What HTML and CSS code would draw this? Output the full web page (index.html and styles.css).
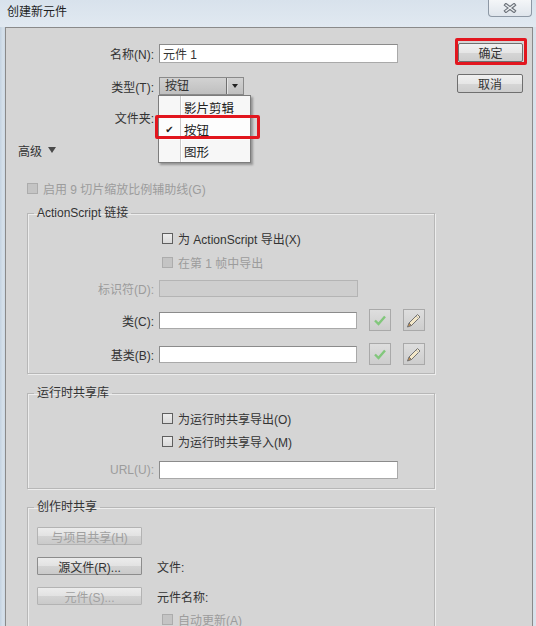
FILE: index.html
```html
<!DOCTYPE html>
<html lang="zh-CN">
<head>
    <meta charset="UTF-8">
    <title>创建新元件</title>
    <link rel="stylesheet" href="styles.css">
</head>
<body>

<div class="window">
    <div class="titlebar">
        <span class="title">创建新元件</span>
        <button class="close">
            <svg width="14" height="10" viewBox="0 0 14 10">
                <path d="M3 2 L11 8 M11 2 L3 8" stroke="#6d737b" stroke-width="3.6" stroke-linecap="square" fill="none"/>
                <path d="M3 2 L11 8 M11 2 L3 8" stroke="#eef1f4" stroke-width="1.3" stroke-linecap="square" fill="none"/>
            </svg>
        </button>
    </div>

    <div class="frame">
        <div class="content">
            <div class="main">
                <div class="row rowName">
                    <span class="label">名称(N):</span>
                    <input class="text textWide" type="text" value="元件 1">
                </div>

                <div class="row rowType">
                    <span class="label">类型(T):</span>
                    <div class="selectWrap">
                        <div class="select">
                            <span class="selectValue">按钮</span>
                            <span class="selectArrow"></span>
                        </div>
                        <ul class="menu">
                            <li><span class="tick"></span>影片剪辑</li>
                            <li class="current"><span class="tick">✔</span>按钮</li>
                            <li><span class="tick"></span>图形</li>
                        </ul>
                        <div class="markMenu"></div>
                    </div>
                </div>

                <div class="row rowFolder">
                    <span class="label">文件夹:</span>
                </div>

                <div class="row advanced">高级<span class="tri"></span></div>

                <div class="row check disabled scaleCheck"><span class="box"></span>启用 9 切片缩放比例辅助线(G)</div>

                <fieldset class="group groupAs">
                    <legend>ActionScript 链接</legend>
                    <div class="row check inGroup firstRow"><span class="box"></span>为 ActionScript 导出(X)</div>
                    <div class="row check inGroup disabled secondCheck"><span class="box"></span>在第 1 帧中导出</div>
                    <div class="row idRow disabled">
                        <span class="label">标识符(D):</span>
                        <span class="text textOff"></span>
                    </div>
                    <div class="row iconRow">
                        <span class="label">类(C):</span>
                        <input class="text textMid" type="text">
                        <button class="iconBtn">
                            <svg width="14" height="12" viewBox="0 0 14 12"><path d="M2 6.5 L5.5 10 L12 2.5" stroke="#82c77c" stroke-width="2.4" fill="none"/></svg>
                        </button>
                        <button class="iconBtn">
                            <svg width="18" height="18" viewBox="0 0 18 18">
                                <path d="M4 12 L12.5 3.5 L15 6 L6.5 14.5 Z" fill="#f3e7c8" stroke="#727272" stroke-width="1"/>
                                <path d="M11 5 L13.5 7.5" stroke="#bdbdbd" stroke-width="1"/>
                                <path d="M4 12 L6.5 14.5 L2.5 16 Z" fill="#c98f4a" stroke="#727272" stroke-width="1"/>
                            </svg>
                        </button>
                    </div>
                    <div class="row iconRow">
                        <span class="label">基类(B):</span>
                        <input class="text textMid" type="text">
                        <button class="iconBtn">
                            <svg width="14" height="12" viewBox="0 0 14 12"><path d="M2 6.5 L5.5 10 L12 2.5" stroke="#82c77c" stroke-width="2.4" fill="none"/></svg>
                        </button>
                        <button class="iconBtn">
                            <svg width="18" height="18" viewBox="0 0 18 18">
                                <path d="M4 12 L12.5 3.5 L15 6 L6.5 14.5 Z" fill="#f3e7c8" stroke="#727272" stroke-width="1"/>
                                <path d="M11 5 L13.5 7.5" stroke="#bdbdbd" stroke-width="1"/>
                                <path d="M4 12 L6.5 14.5 L2.5 16 Z" fill="#c98f4a" stroke="#727272" stroke-width="1"/>
                            </svg>
                        </button>
                    </div>
                </fieldset>

                <fieldset class="group groupRuntime">
                    <legend>运行时共享库</legend>
                    <div class="row check inGroup firstRow"><span class="box"></span>为运行时共享导出(O)</div>
                    <div class="row check inGroup nextCheck"><span class="box"></span>为运行时共享导入(M)</div>
                    <div class="row urlRow">
                        <span class="label labelOff">URL(U):</span>
                        <input class="text textWide" type="text">
                    </div>
                </fieldset>

                <fieldset class="group groupAuthor">
                    <legend>创作时共享</legend>
                    <div class="row btnRow firstBtn">
                        <button class="push pushOff">与项目共享(H)</button>
                    </div>
                    <div class="row btnRow">
                        <button class="push">源文件(R)...</button>
                        <span class="note">文件:</span>
                    </div>
                    <div class="row btnRow">
                        <button class="push pushOff">元件(S)...</button>
                        <span class="note">元件名称:</span>
                    </div>
                    <div class="row check inGroup disabled nextCheck"><span class="box"></span>自动更新(A)</div>
                </fieldset>
            </div>

            <div class="side">
                <div class="markOk">
                    <button class="btn">确定</button>
                </div>
                <button class="btn btnCancel">取消</button>
            </div>
        </div>
    </div>
</div>

</body>
</html>
```

FILE: styles.css
```css
body {
    margin: 0;
    font-family: "Liberation Sans", "Noto Sans CJK SC", sans-serif;
    font-size: 12px;
    color: #333;
}

.window {
    width: 536px;
    height: 626px;
    overflow: hidden;
    display: flex;
    flex-direction: column;
    background: linear-gradient(to right, #c4d3e1, #d6e1eb 3px, #cbd8e4 5px, #cbd8e4 98%, #dae3ec);
}

.titlebar {
    height: 27px;
    flex: none;
    display: flex;
    justify-content: space-between;
    align-items: flex-start;
    padding: 0 4px 0 7px;
    background: linear-gradient(to bottom, #d8e2ec, #e1e9f1);
}

.title {
    line-height: 24px;
    color: #1e1e1e;
}

.close {
    width: 44px;
    height: 17px;
    padding: 0;
    border: 1px solid #8d98a5;
    border-top: none;
    border-radius: 0 0 4px 4px;
    background: linear-gradient(to bottom, #f4f6f8, #dfe5ec);
    display: flex;
    align-items: center;
    justify-content: center;
}

.frame {
    flex: 1;
    min-height: 0;
    display: flex;
    padding: 0 3px 0 5px;
}

.content {
    flex: 1;
    display: flex;
    background: #d5d5d5;
    border: 1px solid #8a8a8a;
    border-bottom: none;
}

.main {
    width: 429px;
    flex: none;
}

.row {
    display: flex;
    align-items: center;
    height: 18px;
    white-space: nowrap;
}

.label {
    width: 153px;
    flex: none;
    box-sizing: border-box;
    padding-right: 5px;
    text-align: right;
}

.text {
    box-sizing: border-box;
    height: 18px;
    margin: 0;
    padding: 0 3px;
    border: 1px solid #8b8b8b;
    border-right-color: #a9a9a9;
    border-bottom-color: #a9a9a9;
    background: #fff;
    font: inherit;
    color: #333;
    outline: none;
}

.textWide {
    width: 239px;
}

.textMid {
    width: 198px;
    height: 17px;
}

.textOff {
    display: block;
    width: 199px;
    height: 17px;
    background: #cecece;
    border-color: #b4b4b4;
}

.rowName {
    margin-top: 16px;
    height: 19px;
}

.rowName .text {
    height: 19px;
}

.rowType {
    margin-top: 14px;
}

.selectWrap {
    position: relative;
}

.select {
    width: 85px;
    height: 18px;
    box-sizing: border-box;
    display: flex;
    border: 1px solid #8a8a8a;
    background: linear-gradient(to bottom, #d2d2d2, #bfbfbf);
}

.selectValue {
    flex: 1;
    padding-left: 5px;
    line-height: 16px;
}

.selectArrow {
    width: 16px;
    border-left: 1px solid #6f6f6f;
    box-shadow: inset 1px 0 0 #e4e4e4;
    position: relative;
}

.selectArrow::after {
    content: "";
    position: absolute;
    left: 5px;
    top: 6px;
    border-left: 3.5px solid transparent;
    border-right: 3.5px solid transparent;
    border-top: 4px solid #222;
}

.menu {
    position: absolute;
    left: -1px;
    top: 18px;
    width: 93px;
    margin: 0;
    padding: 0;
    list-style: none;
    box-sizing: border-box;
    border: 1px solid #7c7c7c;
    background: linear-gradient(to right, transparent 21px, #c9c9c9 21px, #c9c9c9 22px, #ffffff 22px, #ffffff 23px, transparent 23px), #f7f7f7;
    box-shadow: 2px 2px 2px rgba(0, 0, 0, 0.3);
    z-index: 2;
}

.menu li {
    display: flex;
    align-items: center;
    height: 22px;
    color: #222;
    font-size: 12.5px;
}

.menu li.current {
    background: linear-gradient(to right, transparent 21px, #c9c9c9 21px, #c9c9c9 22px, transparent 22px), #fdfdfd;
}

.tick {
    width: 21px;
    margin-right: 4px;
    text-align: center;
    font-family: "DejaVu Sans", sans-serif;
    font-size: 10px;
}

.markMenu {
    position: absolute;
    left: -4px;
    top: 38px;
    width: 105px;
    height: 24px;
    box-sizing: border-box;
    border: 3px solid #e2161e;
    border-radius: 2px;
    z-index: 3;
}

.rowFolder {
    margin-top: 13px;
}

.advanced {
    margin-top: 15px;
    padding-left: 12px;
}

.tri {
    margin-left: 6px;
    border-left: 4px solid transparent;
    border-right: 4px solid transparent;
    border-top: 6px solid #4a4a4a;
}

.box {
    width: 11px;
    height: 11px;
    flex: none;
    box-sizing: border-box;
    margin-right: 5px;
    border: 1px solid #5f5f5f;
    background: linear-gradient(to bottom, #ececec, #dadada);
}

.disabled {
    color: #9c9c9c;
}

.disabled .box {
    border-color: #acacac;
    background: #c4c4c4;
}

.scaleCheck {
    margin-top: 20px;
    padding-left: 21px;
}

.group {
    margin: 9px 0 0 21px;
    padding: 0 0 8px;
    min-width: 0;
    border: 1px solid #b7b7b7;
    box-shadow: 1px 1px 0 #ededed, inset 1px 1px 0 #ededed;
}

.group legend {
    margin-left: 6px;
    padding: 0 3px;
    line-height: 14px;
    color: #333;
}

.group .label {
    width: 131px;
}

.inGroup {
    padding-left: 134px;
}

.firstRow {
    margin-top: 9px;
}

.secondCheck {
    margin-top: 6px;
}

.nextCheck {
    margin-top: 5px;
}

.idRow {
    margin-top: 9px;
    height: 17px;
}

.iconRow {
    margin-top: 12px;
    height: 22px;
}

.iconBtn {
    width: 22px;
    height: 22px;
    padding: 0;
    margin-left: 12px;
    display: flex;
    align-items: center;
    justify-content: center;
    border: 1px solid #a9a9a9;
    background: linear-gradient(to bottom, #dedede, #cdcdcd);
}

.groupRuntime {
    margin-top: 12px;
    padding-bottom: 9px;
}

.urlRow {
    margin-top: 11px;
}

.labelOff {
    color: #9c9c9c;
}

.groupAuthor {
    margin-top: 11px;
}

.btnRow {
    margin-top: 12px;
    padding-left: 9px;
}

.firstBtn {
    margin-top: 13px;
}

.push {
    width: 105px;
    height: 18px;
    padding: 0;
    font: inherit;
    color: #333;
    border: 1px solid #8c8c8c;
    border-radius: 1px;
    background: linear-gradient(to bottom, #ececec, #e2e2e2 50%, #d3d3d3 51%, #cacaca);
}

.pushOff {
    color: #a0a0a0;
    border-color: #b3b3b3;
}

.note {
    margin-left: 15px;
}

.side {
    padding-top: 10px;
    display: flex;
    flex-direction: column;
    align-items: flex-start;
}

.markOk {
    margin-left: 20px;
    padding: 2px 1px 0 0;
    border: 3px solid #e2161e;
    border-radius: 2px;
}

.btn {
    display: block;
    width: 65px;
    height: 19px;
    padding: 0;
    font: inherit;
    color: #333;
    border: 1px solid #6f6f6f;
    border-radius: 2px;
    background: linear-gradient(to bottom, #f0f0f0, #e6e6e6 50%, #d6d6d6 51%, #cdcdcd);
}

.btnCancel {
    width: 66px;
    margin: 9px 0 0 22px;
}
```
